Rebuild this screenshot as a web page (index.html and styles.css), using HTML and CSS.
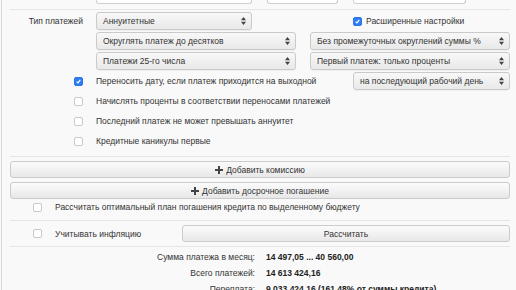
FILE: index.html
```html
<!DOCTYPE html>
<html lang="ru">
<head>
  <meta charset="UTF-8">
  <title>Кредитный калькулятор</title>
  <link rel="stylesheet" href="styles.css">
</head>
<body>
  <div class="panel">
    <div class="stub">
      <span class="stub-box b1"></span>
      <span class="stub-box b2"></span>
      <span class="stub-box b3"></span>
    </div>
    <div class="sep top-sep"></div>

    <div class="form-grid">
      <div class="lbl">Тип платежей</div>
      <div class="sel short"><span>Аннуитетные</span><svg class="arr" width="5" height="8" viewBox="0 0 5 8"><path d="M0 3.2L2.5 0 5 3.2zM0 4.8L2.5 8 5 4.8z"/></svg></div>
      <label class="chk adv"><span class="cb on"><svg width="9" height="9" viewBox="0 0 9 9"><path d="M2.2 4.6l1.6 1.7 3-3.9" fill="none" stroke="#fff" stroke-width="1.5"/></svg></span>Расширенные настройки</label>

      <div></div>
      <div class="sel"><span>Округлять платеж до десятков</span><svg class="arr" width="5" height="8" viewBox="0 0 5 8"><path d="M0 3.2L2.5 0 5 3.2zM0 4.8L2.5 8 5 4.8z"/></svg></div>
      <div class="sel"><span>Без промежуточных округлений суммы %</span><svg class="arr" width="5" height="8" viewBox="0 0 5 8"><path d="M0 3.2L2.5 0 5 3.2zM0 4.8L2.5 8 5 4.8z"/></svg></div>

      <div></div>
      <div class="sel"><span>Платежи 25-го числа</span><svg class="arr" width="5" height="8" viewBox="0 0 5 8"><path d="M0 3.2L2.5 0 5 3.2zM0 4.8L2.5 8 5 4.8z"/></svg></div>
      <div class="sel"><span>Первый платеж: только проценты</span><svg class="arr" width="5" height="8" viewBox="0 0 5 8"><path d="M0 3.2L2.5 0 5 3.2zM0 4.8L2.5 8 5 4.8z"/></svg></div>

      <div class="cb-cell"><span class="cb on"><svg width="9" height="9" viewBox="0 0 9 9"><path d="M2.2 4.6l1.6 1.7 3-3.9" fill="none" stroke="#fff" stroke-width="1.5"/></svg></span></div>
      <div class="txt">Переносить дату, если платеж приходится на выходной</div>
      <div class="sel shift"><span>на последующий рабочий день</span><svg class="arr" width="5" height="8" viewBox="0 0 5 8"><path d="M0 3.2L2.5 0 5 3.2zM0 4.8L2.5 8 5 4.8z"/></svg></div>

      <div class="cb-cell"><span class="cb"></span></div>
      <div class="txt wide">Начислять проценты в соответствии переносами платежей</div>

      <div class="cb-cell"><span class="cb"></span></div>
      <div class="txt wide">Последний платеж не может превышать аннуитет</div>

      <div class="cb-cell"><span class="cb"></span></div>
      <div class="txt wide">Кредитные каникулы первые</div>
    </div>

    <div class="sep mid-sep"></div>

    <div class="actions">
      <button class="btn"><svg width="8" height="8" viewBox="0 0 8 8"><path d="M3 0h2v3h3v2H5v3H3V5H0V3h3z"/></svg>Добавить комиссию</button>
      <button class="btn"><svg width="8" height="8" viewBox="0 0 8 8"><path d="M3 0h2v3h3v2H5v3H3V5H0V3h3z"/></svg>Добавить досрочное погашение</button>
    </div>

    <label class="line"><span class="cb"></span>Рассчитать оптимальный план погашения кредита по выделенному бюджету</label>

    <div class="sep sep2"></div>

    <div class="line calc-line">
      <label class="line-lbl"><span class="cb"></span>Учитывать инфляцию</label>
      <button class="btn calc">Рассчитать</button>
    </div>

    <div class="sep sep3"></div>

    <div class="results">
      <div class="r-lbl">Сумма платежа в месяц:</div>
      <div class="r-val">14 497,05 ... 40 560,00</div>
      <div class="r-lbl">Всего платежей:</div>
      <div class="r-val">14 613 424,16</div>
      <div class="r-lbl">Переплата:</div>
      <div class="r-val">9 033 424,16 (161,48% от суммы кредита)</div>
    </div>
  </div>
</body>
</html>
```

FILE: styles.css
```css
body {
  margin: 0;
  padding: 0;
  background-color: #f8f8f8;
  font-family: "Liberation Sans", Arial, sans-serif;
  font-size: 8.5px;
  color: #333;
  height: 290px;
  overflow: hidden;
}

.panel {
  margin-left: 1px;
  border-left: 1px solid #dadada;
  padding: 0 6px 0 8px;
  width: 500px;
  height: 290px;
  background-color: #f9f9f9;
}

.stub {
  display: flex;
  height: 4px;
}

.stub-box {
  display: block;
  height: 3px;
  background: #fff;
  border: 1px solid #cfcfcf;
  border-top: none;
  border-radius: 0 0 3px 3px;
}

.stub-box.b1 { margin-left: 86px; width: 154px; }
.stub-box.b2 { margin-left: 15px; width: 69px; }
.stub-box.b3 { margin-left: 15px; width: 111px; }

.sep {
  height: 1px;
  background-color: #e6e6e6;
}

.top-sep { margin-top: 5px; }

.form-grid {
  margin-top: 1px;
  display: grid;
  grid-template-columns: 72px 200px 200px;
  grid-auto-rows: 20px;
  column-gap: 14px;
  align-items: center;
}

.lbl {
  text-align: right;
  margin-right: -1px;
}

.sel {
  display: flex;
  align-items: center;
  justify-content: space-between;
  height: 16px;
  padding: 0 5px 0 6px;
  border: 1px solid #cacaca;
  border-radius: 3px;
  background: linear-gradient(#f8f8f8, #e9e9e9);
  box-shadow: 0 1px 0 rgba(0, 0, 0, 0.04);
  white-space: nowrap;
}

.sel.short { width: 143px; }

.sel.shift {
  margin-left: 43px;
}

.arr {
  fill: #444;
  flex: none;
}

.cb {
  display: inline-flex;
  align-items: center;
  justify-content: center;
  box-sizing: border-box;
  width: 9px;
  height: 9px;
  border: 1px solid #c9c9c9;
  border-radius: 2px;
  background: #fff;
  flex: none;
}

.cb.on {
  background: #2f7ef5;
  border-color: #2a74e6;
}

.cb svg { display: block; }

.chk {
  display: flex;
  align-items: center;
  gap: 4px;
}

.adv {
  margin-left: 43px;
}

.cb-cell {
  display: flex;
  justify-content: flex-end;
  margin-right: -1px;
}

.txt {
  white-space: nowrap;
}

.txt.wide {
  grid-column: 2 / -1;
}

.mid-sep { margin-top: 5px; }

.actions {
  margin-top: 4px;
  display: flex;
  flex-direction: column;
  gap: 4px;
}

.btn {
  display: flex;
  align-items: center;
  justify-content: center;
  gap: 3px;
  height: 17px;
  padding: 0;
  border: 1px solid #cbcbcb;
  border-radius: 3px;
  background: linear-gradient(#fbfbfb, #e8e8e8);
  font-family: inherit;
  font-size: 8.5px;
  color: #333;
}

.btn svg {
  fill: #444;
}

.line {
  display: flex;
  align-items: center;
  gap: 13px;
  height: 16px;
  padding-left: 23px;
}

.sep2 { margin-top: 5px; }

.calc-line {
  margin-top: 3px;
  height: 19px;
  justify-content: space-between;
}

.line-lbl {
  display: flex;
  align-items: center;
  gap: 13px;
}

.btn.calc {
  width: 328px;
}

.sep3 { margin-top: 3px; }

.results {
  margin-top: 2px;
  display: grid;
  grid-template-columns: 245px 1fr;
  grid-auto-rows: 16px;
  column-gap: 11px;
  align-items: center;
}

.r-lbl {
  text-align: right;
}

.r-val {
  font-weight: bold;
  color: #222;
}
```
